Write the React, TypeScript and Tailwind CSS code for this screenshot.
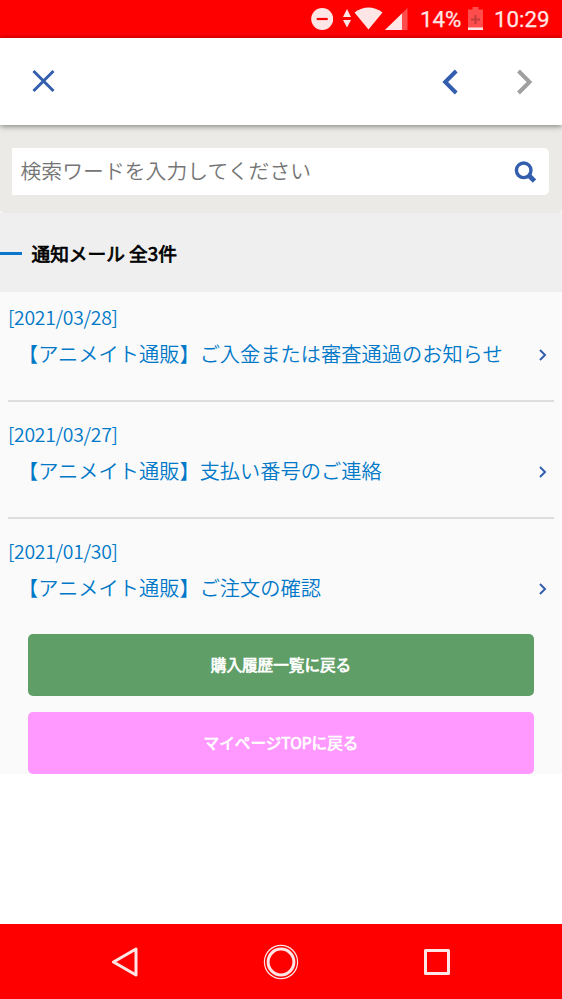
import React from "react";

const mails = [
  { date: "[2021/03/28]", title: "【アニメイト通販】ご入金または審査通過のお知らせ" },
  { date: "[2021/03/27]", title: "【アニメイト通販】支払い番号のご連絡" },
  { date: "[2021/01/30]", title: "【アニメイト通販】ご注文の確認" },
];

function StatusBar() {
  return (
    <div className="flex h-[37.5px] shrink-0 items-start bg-[#ff0000] pl-[311px] font-['Roboto','Liberation_Sans',sans-serif] text-[22.3px] leading-[39px] font-normal text-[#ffe6e6] [-webkit-text-stroke:0.25px_#ffe6e6]">
      <svg className="mt-[8px] h-[22px] w-[22px] shrink-0" viewBox="0 0 22 22">
        <circle cx="11.2" cy="11" r="11" fill="#ffe6e6" />
        <path d="M5.7 11h11" stroke="#f00" strokeWidth="2.2" />
      </svg>
      <svg className="mt-[9px] ml-[10px] h-[19px] w-[8px] shrink-0" viewBox="0 0 8 19">
        <path d="M0 8 4 0l4 8zM0 11h8l-4 7.5z" fill="#ffe6e6" />
      </svg>
      <svg className="mt-[7px] ml-[3px] h-[23px] w-[29px] shrink-0" viewBox="0 0 29 23">
        <path d="M.5 5.5Q14.5-4.5 28.5 5.5L14.5 22.5z" fill="#ffe6e6" />
      </svg>
      <svg className="mt-[8px] ml-[2px] h-[22px] w-[23px] shrink-0" viewBox="0 0 23 22">
        <path d="M0 22 22.5 0v22z" fill="#ff4c4c" />
        <path d="M0 22 17 5.4V22z" fill="#ffe6e6" />
      </svg>
      <span className="ml-[12px] w-[41px] whitespace-nowrap">14%</span>
      <svg className="mt-[7px] ml-[7px] h-[23px] w-[15px] shrink-0" viewBox="0 0 15 23">
        <path d="M4.5 0h6v2.5H15V20H0V2.5h4.5z" fill="#ff4c4c" />
        <path d="M7.5 8v9M3 12.5h9" stroke="#c23c3c" strokeWidth="2" />
        <path d="M0 20.3h15V23H0z" fill="#ffe6e6" />
      </svg>
      <span className="ml-[11px] whitespace-nowrap">10:29</span>
    </div>
  );
}

function Header() {
  return (
    <header className="relative z-10 flex h-[87.5px] shrink-0 items-center bg-white shadow-[0_1px_6px_rgba(0,0,0,0.5)]">
      <svg className="ml-[32px] h-[24px] w-[24px]" viewBox="0 0 24 24" fill="none" stroke="#335eae" strokeWidth="3">
        <path d="m1.5 2 20 20M21.5 2l-20 20" />
      </svg>
      <svg className="mt-px ml-[386px] h-[26px] w-[17px]" viewBox="0 0 17 26" fill="none" stroke="#335eae" strokeWidth="4">
        <path d="M14.2 2 3.2 13l11 11" />
      </svg>
      <svg className="mt-px ml-[57px] h-[26px] w-[17px]" viewBox="0 0 17 26" fill="none" stroke="#a0a0a0" strokeWidth="4">
        <path d="m2.5 2 11 11-11 11" />
      </svg>
    </header>
  );
}

function SearchBar() {
  return (
    <div className="h-[88px] shrink-0 bg-[#fafafa]">
      <div className="h-full rounded-b-[4px] bg-[#ebeae6] px-[12px] pt-[23px]">
        <div className="flex h-[47px] w-[537px] items-center justify-between rounded-r-[5px] bg-white pr-[13px] pl-[8.5px]">
          <span className="-mt-[3px] text-[20.8px] leading-[44px] font-[350] tracking-[0.05px] text-[#757575]">検索ワードを入力してください</span>
          <svg className="h-[22px] w-[22px]" viewBox="0 0 22 22" fill="none" stroke="#335eae">
            <circle cx="9.7" cy="9.3" r="7.3" strokeWidth="3.4" />
            <path d="m14.7 14.3 5.8 5.8" strokeWidth="4.8" />
          </svg>
        </div>
      </div>
    </div>
  );
}

export default function App() {
  return (
    <div className="flex h-[999px] w-[562px] flex-col overflow-hidden bg-white font-['Noto_Sans_CJK_JP',sans-serif]">
      <StatusBar />
      <Header />
      <SearchBar />
      <div className="flex h-[79px] shrink-0 items-center bg-[#efefef]">
        <div className="mt-px h-[3px] w-[22px] bg-[#0b76cb]" />
        <h1 className="ml-[9.5px] text-[18.7px] leading-[77px] font-normal text-black [-webkit-text-stroke:0.75px_black]">通知メール 全3件</h1>
      </div>
      <main className="h-[482px] shrink-0 bg-[#fafafa]">
        <ul className="px-[8px]">
          {mails.map((mail) => (
            <li key={mail.date} className="h-[117px] border-b-2 border-[#dedede] pt-[14px] font-[350] text-[20.2px] text-[#0078c8] first:h-[110px] first:pt-[7px] last:h-[108px] last:border-b-0">
              <div className="h-[36px] text-[19.4px] leading-[36px] tracking-[-0.3px]">{mail.date}</div>
              <div className="flex h-[37px] items-center justify-between pr-[7px] pl-[10px]">
                <span className="leading-[37px] tracking-[0.04px] whitespace-nowrap">{mail.title}</span>
                <svg className="mt-[3px] h-[12px] w-[8px]" viewBox="0 0 8 12" fill="none" stroke="#335eae" strokeWidth="2">
                  <path d="m1 1 5 5-5 5" />
                </svg>
              </div>
            </li>
          ))}
        </ul>
        <div className="mt-[7px] flex flex-col gap-[16px] px-[28px] text-center text-[15.6px] font-normal text-white [-webkit-text-stroke:0.7px_white]">
          <button className="h-[62px] rounded-[5px] bg-[#609e67]">購入履歴一覧に戻る</button>
          <button className="h-[62px] rounded-[5px] bg-[#ff99ff]">マイページTOPに戻る</button>
        </div>
      </main>
      <nav className="mt-auto flex h-[75px] shrink-0 items-center bg-[#ff0000] pl-[111px]">
        <svg className="h-[30px] w-[28px]" viewBox="0 0 28 30" fill="none" stroke="#ffe6e6" strokeWidth="3" strokeLinejoin="round">
          <path d="M2.5 15 25 2v26z" />
        </svg>
        <svg className="ml-[124px] h-[36px] w-[36px]" viewBox="0 0 36 36" fill="none" stroke="#ffe6e6">
          <circle cx="18" cy="18" r="16.6" strokeWidth="1.2" />
          <circle cx="18" cy="18" r="12.9" strokeWidth="3" />
        </svg>
        <svg className="ml-[125px] h-[26px] w-[26px]" viewBox="0 0 26 26" fill="none" stroke="#ffe6e6" strokeWidth="3" strokeLinejoin="round">
          <path d="M1.5 1.5h23v23h-23z" />
        </svg>
      </nav>
    </div>
  );
}
